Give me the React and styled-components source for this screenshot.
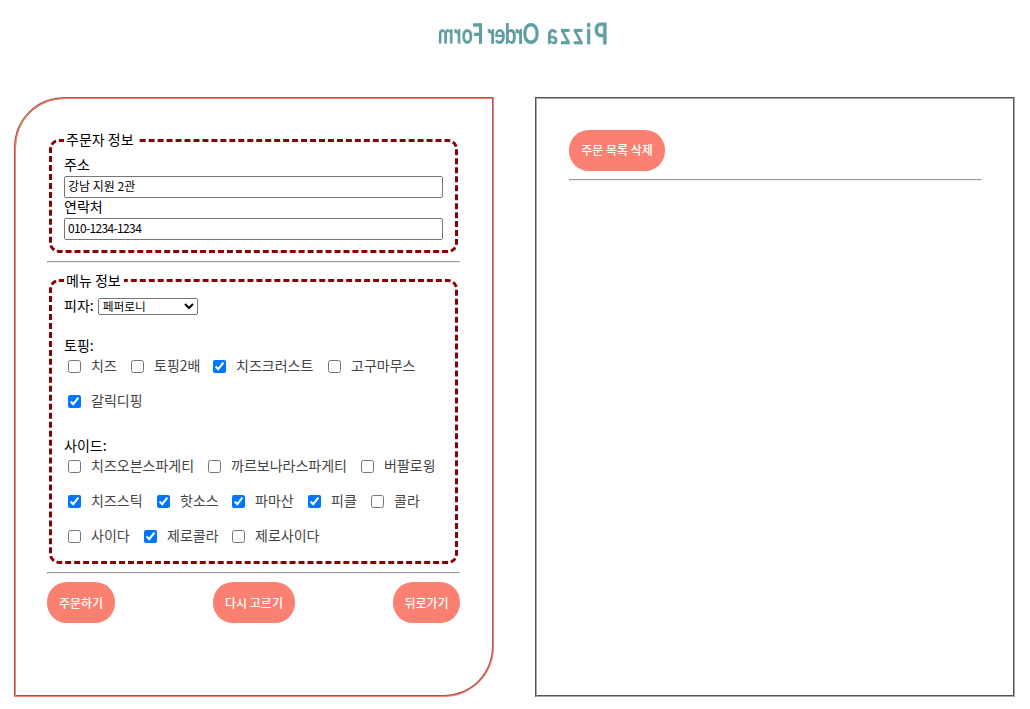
import React from 'react';
import styled, { createGlobalStyle } from 'styled-components';

const GlobalStyle = createGlobalStyle`
  * { box-sizing: border-box; }
  body {
    margin: 0;
    background: #fff;
    color: #000;
    font: 14px/20px "Noto Sans CJK KR", sans-serif;
  }
`;

const Page = styled.div`
  width: 1030px;
  height: 709px;
  overflow: hidden;
`;

const Header = styled.header`
  display: flex;
  justify-content: center;
  height: 97px;
  padding: 13px 0 0 8px;
`;

const Title = styled.h1`
  margin: 0;
  height: 40px;
  font: 900 28px/40px Lato, sans-serif;
  color: cadetblue;
  white-space: nowrap;
  transform: perspective(800px) rotateY(156deg) scaleX(0.8);
`;

const Word = styled.span`
  letter-spacing: ${(p) => p.$spacing}px;
`;

const Panels = styled.main`
  display: flex;
  gap: 41px;
  padding-left: 14px;
`;

const OrderPanel = styled.form`
  width: 480px;
  height: 600px;
  padding: 31px 32px 0 31px;
  border: 2px groove salmon;
  border-radius: 50px 0;
`;

const ListPanel = styled.section`
  width: 480px;
  height: 600px;
  padding: 31px 31px 0 32px;
  border: 2px groove darkgray;
`;

const Group = styled.fieldset`
  margin: 0 2px;
  padding: 5px 12px 10px;
  border: 3px dashed darkred;
  border-radius: 10px;
`;

const GroupTitle = styled.legend`
  width: ${(p) => p.$width}px;
  height: ${(p) => p.$height}px;
  padding: 0 2px;
  line-height: 18px;
  white-space: nowrap;
`;

const Field = styled.label`
  display: block;
  height: 42px;
  line-height: 17px;
`;

const TextInput = styled.input`
  display: block;
  width: 100%;
  height: 22px;
  margin: 3px 0 0;
  padding: 0 2px 3px;
  font: 12px "Noto Sans CJK KR", sans-serif;
  letter-spacing: ${(p) => p.$spacing || 0}px;
`;

const Divider = styled.hr`
  margin: 8px 0;
`;

const PizzaRow = styled.label`
  display: flex;
  align-items: center;
  gap: 4px;
  height: 23px;
`;

const Caption = styled.span`
  padding-bottom: 3px;
`;

const Select = styled.select`
  width: 100px;
  height: 17px;
  padding: 0;
  font: 11.7px "Liberation Sans", "Noto Sans CJK KR", sans-serif;
`;

const Section = styled.div`
  padding-top: ${(p) => p.$top}px;
`;

const SectionTitle = styled.div`
  height: 20px;
  line-height: 18px;
`;

const Options = styled.div`
  display: grid;
  row-gap: 14px;
  padding-bottom: ${(p) => p.$bottom || 0}px;
`;

const OptionRow = styled.div`
  display: flex;
  height: 21px;
  padding-left: 4px;
`;

const Option = styled.label`
  display: flex;
  align-items: center;
  gap: 10px;
  flex: none;
  width: ${(p) => (p.$width ? `${p.$width}px` : 'auto')};
  color: #444;
  white-space: nowrap;
`;

const Checkbox = styled.input`
  flex: none;
  width: 13px;
  height: 13px;
  margin: 0;
`;

const Actions = styled.div`
  display: flex;
  justify-content: space-between;
`;

const Button = styled.button`
  width: ${(p) => p.$width}px;
  height: 41px;
  padding: 0 0 ${(p) => p.$lift || 1}px;
  border: 0;
  border-radius: 20px;
  background: salmon;
  color: #fff;
  font: 500 12px "Noto Sans CJK KR", sans-serif;
  white-space: nowrap;
`;

const toppings = [
  [
    { name: '치즈', width: 63 },
    { name: '토핑2배', width: 82 },
    { name: '치즈크러스트', width: 115, checked: true },
    { name: '고구마무스' },
  ],
  [{ name: '갈릭디핑', checked: true }],
];

const sides = [
  [
    { name: '치즈오븐스파게티', width: 140 },
    { name: '까르보나라스파게티', width: 153 },
    { name: '버팔로윙' },
  ],
  [
    { name: '치즈스틱', width: 89, checked: true },
    { name: '핫소스', width: 75, checked: true },
    { name: '파마산', width: 76, checked: true },
    { name: '피클', width: 63, checked: true },
    { name: '콜라' },
  ],
  [
    { name: '사이다', width: 76 },
    { name: '제로콜라', width: 88, checked: true },
    { name: '제로사이다' },
  ],
];

function OptionList({ rows, bottom }) {
  return (
    <Options $bottom={bottom}>
      {rows.map((row) => (
        <OptionRow key={row[0].name}>
          {row.map((o) => (
            <Option key={o.name} $width={o.width}>
              <Checkbox type="checkbox" defaultChecked={o.checked} />
              <Caption>{o.name}</Caption>
            </Option>
          ))}
        </OptionRow>
      ))}
    </Options>
  );
}

export default function App() {
  return (
    <Page>
      <GlobalStyle />
      <Header>
        <Title>
          <Word $spacing={3.4}>Pizza</Word> <Word $spacing={-0.8}>Order</Word>{' '}
          <Word $spacing={0.7}>Form</Word>
        </Title>
      </Header>
      <Panels>
        <OrderPanel>
          <Group>
            <GroupTitle $width={75} $height={21}>주문자 정보</GroupTitle>
            <Field>
              주소
              <TextInput defaultValue="강남 지원 2관" />
            </Field>
            <Field>
              연락처
              <TextInput defaultValue="010-1234-1234" $spacing={-0.65} />
            </Field>
          </Group>
          <Divider />
          <Group>
            <GroupTitle $width={60} $height={19}>메뉴 정보</GroupTitle>
            <PizzaRow>
              <Caption>피자:</Caption>
              <Select defaultValue="페퍼로니">
                <option>페퍼로니</option>
              </Select>
            </PizzaRow>
            <Section $top={18}>
              <SectionTitle>토핑:</SectionTitle>
              <OptionList rows={toppings} />
            </Section>
            <Section $top={24}>
              <SectionTitle>사이드:</SectionTitle>
              <OptionList rows={sides} bottom={4} />
            </Section>
          </Group>
          <Divider />
          <Actions>
            <Button type="button" $width={68}>주문하기</Button>
            <Button type="button" $width={82}>다시 고르기</Button>
            <Button type="button" $width={67}>뒤로가기</Button>
          </Actions>
        </OrderPanel>
        <ListPanel>
          <Actions>
            <Button type="button" $width={96} $lift={3}>주문 목록 삭제</Button>
          </Actions>
          <Divider />
        </ListPanel>
      </Panels>
    </Page>
  );
}
